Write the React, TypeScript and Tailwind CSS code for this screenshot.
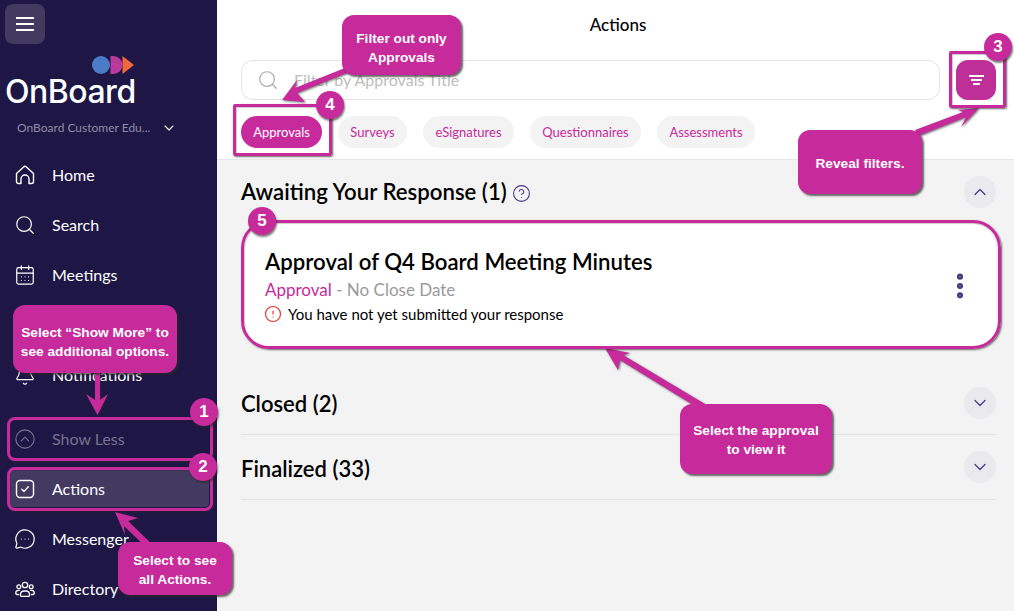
import React from 'react';
import { ChevronDown, ChevronUp, CircleAlert, CircleChevronUp, CircleHelp, EllipsisVertical, MessageCircleMore, Search, Bell, CalendarDays } from 'lucide-react';

const lato = { fontFamily: '"Lato", "Noto Sans", sans-serif' };

const HomeIcon = () => (
  <svg width="20" height="20" viewBox="0 0 20 20" fill="none" stroke="currentColor" strokeWidth="1.4" strokeLinejoin="round">
    <path d="M1.5 8.5 8.6 1.9a2 2 0 0 1 2.8 0l7.1 6.6V16.500a2 2 0 0 1-2 2h-2.500v-4.500a4 4 0 0 0-8 0v4.500H3.500a2 2 0 0 1-2-2Z" />
  </svg>
);

const ActionsIcon = () => (
  <svg width="20" height="20" viewBox="0 0 20 20" fill="none" stroke="currentColor" strokeWidth="1.4" strokeLinecap="round" strokeLinejoin="round">
    <rect x="1.500" y="1.500" width="17" height="17" rx="3.500" />
    <path d="m6.800 10.200 2.300 2.200 4.200-4.600" />
  </svg>
);

const DirectoryIcon = () => (
  <svg width="20" height="20" viewBox="0 0 20 20" fill="none" stroke="currentColor" strokeWidth="1.3" strokeLinecap="round">
    <circle cx="10" cy="6" r="2.700" />
    <circle cx="3.800" cy="7.800" r="1.900" />
    <circle cx="16.200" cy="7.800" r="1.900" />
    <path d="M5.500 16.500v-1.500a3.500 3.500 0 0 1 3.500-3h2a3.500 3.500 0 0 1 3.500 3v1.500a1 1 0 0 1-1 .8h-7a1 1 0 0 1-1-.8Z" />
    <path d="M3.500 15.500H2a1.200 1.200 0 0 1-1.200-1.200v-.6A2.500 2.500 0 0 1 3.300 11.300h1" />
    <path d="M16.500 15.500H18a1.200 1.200 0 0 0 1.200-1.200v-.6a2.500 2.500 0 0 0-2.500-2.400h-1" />
  </svg>
);

const NavRow: React.FC<{ icon: React.ReactNode, label: string, className?: string }> = ({ icon, label, className }) => (
  <div className={`h-[50px] flex items-center pl-[15px] text-[16px] ${className ?? 'text-white'}`}>
    <span className="w-[37px] shrink-0 flex">{icon}</span>
    <span>{label}</span>
  </div>
);

const Chip: React.FC<{ label: string, active?: boolean, className: string }> = ({ label, active, className }) => (
  <div className={`h-[32px] rounded-full flex items-center justify-center text-[13px] pt-[1px] ${className} ${active ? 'bg-[#c72a9b] text-white' : 'bg-[#f3f3f3] text-[#c72a9b]'}`}>
    {label}
  </div>
);

const RoundToggle: React.FC<{ up?: boolean }> = ({ up }) => (
  <div className="w-[32px] h-[32px] rounded-full bg-[#e9e9ee] flex items-center justify-center text-[#4b3b84]">
    {up ? <ChevronUp size={20} strokeWidth={1.5} /> : <ChevronDown size={20} strokeWidth={1.5} />}
  </div>
);

const Callout: React.FC<{ className: string, children: React.ReactNode }> = ({ className, children }) => (
  <div
    className={`absolute z-30 bg-[#c72a9b] rounded-[12px] shadow-[2px_2px_2px_rgba(40,40,40,0.7)] flex items-center justify-center text-center text-white font-bold text-[13.700px] leading-[19px] ${className}`}
    style={{ fontFamily: '"Liberation Sans", Arial, sans-serif' }}
  >
    <div>{children}</div>
  </div>
);

const Badge: React.FC<{ n: number, className: string }> = ({ n, className }) => (
  <div
    className={`absolute z-30 w-[28px] h-[28px] rounded-full bg-[#c72a9b] shadow-[1px_2px_2px_rgba(40,40,40,0.6)] flex items-center justify-center text-white font-bold text-[17px] ${className}`}
    style={{ fontFamily: '"Liberation Sans", Arial, sans-serif' }}
  >
    {n}
  </div>
);

const Box: React.FC<{ className: string }> = ({ className }) => (
  <div className={`absolute z-20 border-[3px] border-[#c72a9b] shadow-[1px_1px_2px_rgba(40,40,40,0.7),inset_1px_1px_1px_rgba(40,40,40,0.25)] ${className}`} />
);

export default function App() {
  return (
    <div className="relative w-[1014px] h-[611px] flex overflow-hidden bg-white" style={lato}>
      {/* sidebar */}
      <aside className="w-[217px] shrink-0 bg-[#1e1745] text-white">
        <div className="pl-[5px] pt-[4px]">
          <div className="w-[40px] h-[40px] rounded-[8px] bg-[#433a62] flex flex-col items-center justify-center gap-[4.500px]">
            <span className="block w-[18px] h-[1.500px] bg-white" />
            <span className="block w-[18px] h-[1.500px] bg-white" />
            <span className="block w-[18px] h-[1.500px] bg-white" />
          </div>
        </div>

        <div className="h-[60px] mt-[12px] pl-[5px]">
          <svg width="130" height="18" viewBox="0 0 130 18" className="block ml-[1px]">
            <circle cx="95" cy="9" r="9" fill="#4b7bc6" />
            <path d="M104.500 0h3a9 9 0 0 1 0 18h-3Z" fill="#b93a9c" />
            <path d="M116.500 0 128 9 116.500 18Z" fill="#f0673a" />
          </svg>
          <div className="text-[32px] leading-[35px] font-medium tracking-[-0.5px]" style={{ fontFamily: 'Inter, sans-serif' }}>OnBoard</div>
        </div>

        <div className="h-[20px] mt-[2px] pl-[17px] flex items-center text-[12px] text-[#8f8aa3]">
          <span>OnBoard Customer Edu...</span>
          <ChevronDown size={16} strokeWidth={1.7} className="ml-[11px] text-white" />
        </div>

        <nav className="mt-[12px]">
          <NavRow icon={<HomeIcon />} label="Home" />
          <NavRow icon={<Search size={22} strokeWidth={1.3} className="-ml-[1px]" />} label="Search" />
          <NavRow icon={<CalendarDays size={22} strokeWidth={1.3} className="-ml-[1px]" />} label="Meetings" />
          <NavRow icon={<span className="w-[20px]" />} label="" />
          <NavRow icon={<Bell size={22} strokeWidth={1.3} className="-ml-[1px]" />} label="Notifications" />
          <NavRow icon={<CircleChevronUp size={22} strokeWidth={1.2} className="-ml-[1px]" />} label="Show Less" className="mt-[14px] text-[#77728f]" />
          <div className="relative">
            <div className="absolute left-[9px] right-[8px] top-[6px] bottom-[7px] bg-[#433a62] rounded-[4px]" />
            <div className="relative">
              <NavRow icon={<ActionsIcon />} label="Actions" />
            </div>
          </div>
          <NavRow icon={<MessageCircleMore size={22} strokeWidth={1.3} className="-ml-[1px]" />} label="Messenger" />
          <NavRow icon={<DirectoryIcon />} label="Directory" />
        </nav>
      </aside>

      {/* main column */}
      <main className="flex-1 min-w-0 flex flex-col">
        <header className="h-[160px] shrink-0 border-b border-[#e6e6e6] bg-white">
          <div className="h-[50px] flex items-center justify-center pl-[5px] text-[17px] text-black font-medium">Actions</div>
          <div className="mt-[10px] flex px-[24px] gap-[16px]">
            <div className="h-[40px] flex-1 rounded-[12px] border border-[#e3e3e3] flex items-center pl-[15px] text-[16px] text-[#bdbdbd]">
              <Search size={22} strokeWidth={1.3} className="text-[#aaaaaa] mr-[15px]" />
              <span>Filter by Approvals Title</span>
            </div>
            <div className="w-[40px] h-[40px] mr-[-6px] rounded-[12px] bg-[#bf2f98] flex flex-col items-center justify-center gap-[2.500px]">
              <span className="block w-[15px] h-[1.500px] bg-white" />
              <span className="block w-[11px] h-[1.500px] bg-white" />
              <span className="block w-[7px] h-[1.500px] bg-white" />
            </div>
          </div>
          <div className="mt-[16px] flex px-[24px] gap-[16px]">
            <Chip label="Approvals" active className="w-[81px]" />
            <Chip label="Surveys" className="w-[69px]" />
            <Chip label="eSignatures" className="w-[91px]" />
            <Chip label="Questionnaires" className="w-[111px]" />
            <Chip label="Assessments" className="w-[98px]" />
          </div>
        </header>

        <section className="flex-1 bg-[#f3f3f3] pl-[24px] pr-[18px] text-black">
          <div className="h-[63px] flex items-center justify-between">
            <div className="flex items-center gap-[5px] text-[22.200px] font-semibold pt-[1px]">
              <span>Awaiting Your Response (1)</span>
              <CircleHelp size={19} strokeWidth={1.4} className="text-[#4b3b84] mt-[3px]" />
            </div>
            <RoundToggle up />
          </div>

          <div className="h-[125px] bg-white rounded-[26px] pl-[24px] pr-[26px] flex items-center justify-between mb-[23px]">
            <div>
              <div className="text-[22.200px] leading-[28px] font-semibold pt-[1px] -mt-[1px]">Approval of Q4 Board Meeting Minutes</div>
              <div className="text-[17px] leading-[20px] mt-[4px] text-[#9a9a9a]">
                <span className="text-[#c72a9b]">Approval</span> - No Close Date
              </div>
              <div className="flex items-center gap-[6px] text-[15px] leading-[20px] mt-[4px]">
                <CircleAlert size={18} strokeWidth={1.6} className="text-[#e8322a] -ml-[1px]" />
                <span>You have not yet submitted your response</span>
              </div>
            </div>
            <EllipsisVertical size={32} strokeWidth={2.6} className="text-[#4b3b84] mr-[-6px]" />
          </div>

          <div className="h-[65px] mt-[-1px] flex items-center justify-between border-b border-[#e2e2e2] pt-[2px]">
            <span className="text-[22px] font-semibold">Closed (2)</span>
            <RoundToggle />
          </div>
          <div className="h-[65px] flex items-center justify-between border-b border-[#e2e2e2]">
            <span className="text-[22px] font-semibold pt-[2px]">Finalized (33)</span>
            <RoundToggle />
          </div>
        </section>
      </main>

      {/* tutorial annotations over the screen */}
      <svg width="1014" height="611" viewBox="0 0 1014 611" className="absolute left-0 top-0 z-20 pointer-events-none" style={{ filter: 'drop-shadow(1px 1px 1px rgba(40,40,40,0.65))' }}>
        <g fill="#c72a9b">
          <polygon points="95,370 100,370 100,400 108,394 97.500,415 86,394 95,400" />
          <polygon points="156,548 152,553 124,526 125,535 115,512 138,518 128,521" />
          <polygon points="350,66 352,71 297,93 305,102 282,100 297,80 295,88" />
          <polygon points="915,130 918,136 966,117 961,127 979,108 958,110 963,112" />
          <polygon points="705,404 698,408 620,360 618,370 605,348 630,353 623,355" />
        </g>
      </svg>

      <Box className="left-[7px] top-[417px] w-[206px] h-[44px] rounded-[8px]" />
      <Box className="left-[7px] top-[467px] w-[206px] h-[44px] rounded-[8px]" />
      <Box className="left-[949px] top-[51px] w-[57px] h-[57px] rounded-[2px]" />
      <Box className="left-[233px] top-[104px] w-[99px] h-[52px] rounded-[2px]" />
      <Box className="left-[241px] top-[220px] w-[760px] h-[129px] rounded-[28px]" />

      <Badge n={1} className="left-[190px] top-[398px]" />
      <Badge n={2} className="left-[189px] top-[453px]" />
      <Badge n={3} className="left-[984px] top-[33px]" />
      <Badge n={4} className="left-[316px] top-[91px]" />
      <Badge n={5} className="left-[248px] top-[207px]" />

      <Callout className="left-[13px] top-[305px] w-[164px] h-[68px] pt-[6px]">Select “Show More” to<br />see additional options.</Callout>
      <Callout className="left-[118px] top-[542px] w-[114px] h-[53px] pt-[2px]">Select to see<br />all Actions.</Callout>
      <Callout className="left-[342px] top-[15px] w-[119px] h-[60px] pt-[6px]">Filter out only<br />Approvals</Callout>
      <Callout className="left-[798px] top-[130px] w-[124px] h-[64px] pt-[2px]">Reveal filters.</Callout>
      <Callout className="left-[680px] top-[404px] w-[152px] h-[70px] pt-[2px]">Select the approval<br />to view it</Callout>
    </div>
  );
}
